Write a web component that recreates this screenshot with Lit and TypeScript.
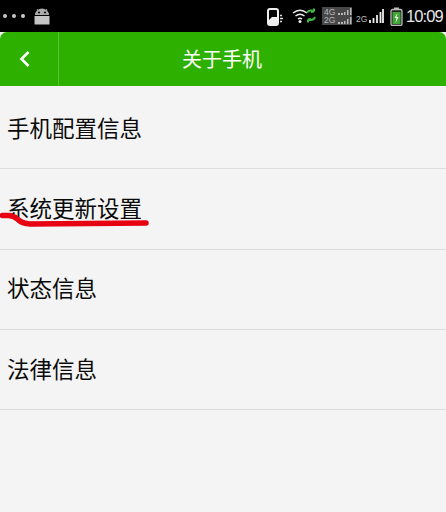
import { LitElement, html, css, svg } from "lit";
import { customElement } from "lit/decorators.js";

@customElement("app-root")
export class AppRoot extends LitElement {
  static styles = css`
    :host { display: block; width: 446px; height: 512px; background: #f4f4f4; overflow: hidden; position: relative;
      font-family: "Noto Sans CJK SC", "Liberation Sans", sans-serif; }
    .status { height: 32px; background: #000; display: flex; align-items: center; }
    .dots { display: flex; gap: 5px; margin-left: 3px; width: 31px; }
    .dots i { width: 4px; height: 4px; border-radius: 50%; background: #c8c8c8; }
    .spacer { flex: 1; }
    .status svg { display: block; flex: none; }
    .time { font: 16.5px "Liberation Sans", sans-serif; letter-spacing: -0.9px; color: #e8e8e8; margin: 0 3px 0 3px; width: 37px; white-space: nowrap; }
    .phone { margin-top: 1px; }
    .wifi { margin-left: 8px; }
    .net { width: 30px; height: 18px; background: #484848; margin: 0 0 0 6px; display: flex; flex-direction: column; justify-content: center;
      font: 8.5px/8.5px "Liberation Sans", sans-serif; color: #b8b8b8; padding-left: 2px; box-sizing: border-box; }
    .net div { display: flex; align-items: center; gap: 2px; }
    .net2 { font: 8.5px "Liberation Sans", sans-serif; color: #bbb; margin: 6px 0 0 4px; width: 13px; }
    .battery { margin-left: 6px; }
    .bar { height: 54px; background: #2eb000; border-radius: 7px 7px 0 0; display: flex; align-items: center; position: relative; }
    .back { height: 54px; border-right: 1px solid #57c136; display: flex; align-items: center; padding-left: 18px; box-sizing: border-box; width: 59px; }
    .title { position: absolute; left: 0; right: 2px; text-align: center; color: #fff; font-size: 20px; line-height: 54px; }
    .list { margin-top: 3px; }
    .row { height: 80.33px; box-sizing: border-box; border-bottom: 1px solid #dcdcdc; display: flex; align-items: center; padding: 0 0 4px 7px; font-size: 22.5px; color: #0a0a0a; }
    .mark { position: absolute; left: 0; top: 208px; pointer-events: none; }
  `;

  render() {
    const rows = ["手机配置信息", "系统更新设置", "状态信息", "法律信息"];
    const mini = html`<svg width="15" height="7" viewBox="0 0 15 7"><path d="M1 7V5h2v2zM4 7V5h2v2zM7 7V4h1.500v3zM10 7V2h1.500v5zM13 7V0h1.500v7z" fill="#b8b8b8"/></svg>`;
    return html`
      <div class="status">
        <div class="dots"><i></i><i></i><i></i></div>
        <svg width="16" height="18" viewBox="0 0 16 18">
          <path d="M1 8a7 6.500 0 0 1 14 0z" fill="#aaa"/>
          <path d="M3 2l2 3M13 2l-2 3" stroke="#aaa" stroke-width="1"/>
          <rect x="0.500" y="9" width="15" height="8.500" fill="#c4c4c4"/>
          <circle cx="5" cy="5.500" r="1" fill="#000"/><circle cx="11" cy="5.500" r="1" fill="#000"/>
        </svg>
        <div class="spacer"></div>
        <svg class="phone" width="17" height="18" viewBox="0 0 17 18">
          <rect x="1" y="1" width="10" height="16" rx="2" fill="none" stroke="#eee" stroke-width="2"/>
          <path d="M5 9h6v8H2v-5z" fill="#eee"/>
          <path d="M13 7.500h2M13 10.500h3M13 13.500h2" stroke="#ddd" stroke-width="1.500"/>
        </svg>
        <svg class="wifi" width="24" height="16" viewBox="0 0 24 16">
          <path d="M1 5q7-5.500 14 0M3.500 8q4.500-3.500 9 0M6 11q2-1.500 4 0" fill="none" stroke="#eee" stroke-width="1.500"/>
          <circle cx="8" cy="13.500" r="1.500" fill="#eee"/>
          <path d="M15 4.500a5 5 0 0 1 7-1M22 3.500v-3M22 3.500l-3 .5" fill="none" stroke="#3fb83f" stroke-width="2"/>
          <path d="M23 9a5 5 0 0 1-7 2.500M16 11.500v3M16 11.500l3-.5" fill="none" stroke="#3fb83f" stroke-width="2"/>
        </svg>
        <div class="net"><div><span>4G</span>${mini}</div><div><span>2G</span>${mini}</div></div>
        <span class="net2">2G</span>
        <svg width="15" height="16" viewBox="0 0 15 16">
          <path d="M1 15v-3M4.500 15v-5M8 15v-8M11.500 15v-11M14 15v-14" stroke="#eee" stroke-width="1.800"/>
        </svg>
        <svg class="battery" width="13" height="19" viewBox="0 0 13 19">
          <rect x="1" y="2.500" width="11" height="16" rx="1.500" fill="#222" stroke="#bbb" stroke-width="1.300"/>
          <rect x="4" y="0.500" width="5" height="2" fill="#bbb"/>
          <rect x="2.500" y="5" width="8" height="12" fill="#3fa535"/>
          <path d="M7.500 6l-3 5h2l-1 5 3-6h-2z" fill="#fff"/>
        </svg>
        <span class="time">10:09</span>
      </div>
      <div class="bar">
        <div class="back">
          <svg width="14" height="18" viewBox="0 0 14 18"><path d="M10.500 2L3.500 9l7 7" fill="none" stroke="#fff" stroke-width="2.600"/></svg>
        </div>
        <div class="title">关于手机</div>
      </div>
      <div class="list">
        ${rows.map((r) => html`<div class="row">${r}</div>`)}
      </div>
      <svg class="mark" width="160" height="24" viewBox="0 0 160 24">
        ${svg`<path d="M2.500 7.500L9 7.500Q14 8 18 11.500Q22 15.500 30 16L146 15" fill="none" stroke="#e60012" stroke-width="5.500" stroke-linecap="round" stroke-linejoin="round"/>`}
      </svg>
    `;
  }
}
